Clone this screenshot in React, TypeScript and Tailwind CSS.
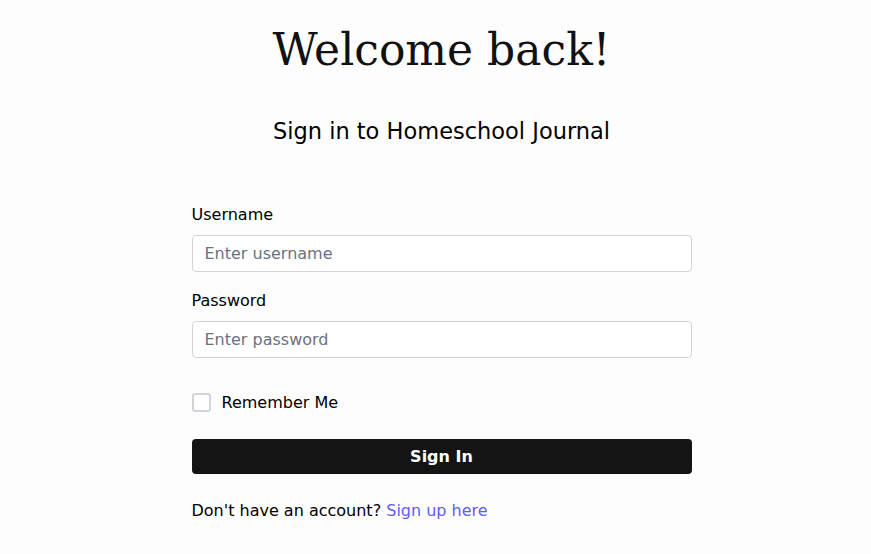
import { useState } from "react";

export default function App() {
  const [remember, setRemember] = useState(false);

  return (
    <main className="min-h-screen bg-[#fdfdfd] flex flex-col items-center pt-[22px] pl-[12px] font-['DejaVu_Sans',sans-serif] text-black">
      <h1 className="font-['DejaVu_Serif',serif] text-[44px] leading-[56px] font-normal text-[#111]">
        Welcome back!
      </h1>
      <h2 className="mt-[39px] text-[22.5px] leading-[28px] font-normal">
        Sign in to Homeschool Journal
      </h2>

      <form
        className="mt-[58px] w-[500px] flex flex-col"
        onSubmit={(e) => e.preventDefault()}
      >
        <label htmlFor="username" className="text-[16px] leading-[24px]">
          Username
        </label>
        <input
          id="username"
          type="text"
          placeholder="Enter username"
          className="mt-2 h-[37px] w-full rounded-[4px] border border-[#d4d4d8] bg-white px-3 text-[16px] placeholder:text-[#6b7280] outline-none"
        />

        <label htmlFor="password" className="mt-[17px] text-[16px] leading-[24px]">
          Password
        </label>
        <input
          id="password"
          type="password"
          placeholder="Enter password"
          className="mt-2 h-[37px] w-full rounded-[4px] border border-[#d4d4d8] bg-white px-3 text-[16px] placeholder:text-[#6b7280] outline-none"
        />

        {/* remember me checkbox */}
        <label className="mt-[35px] flex items-center gap-[11px] h-[19px] cursor-pointer">
          <input
            type="checkbox"
            checked={remember}
            onChange={() => setRemember(!remember)}
            className="appearance-none w-[19px] h-[19px] rounded-[3px] border-2 border-[#d1d5db] bg-white"
          />
          <span className="text-[16px] leading-[24px]">Remember Me</span>
        </label>

        <button
          type="submit"
          className="mt-[27px] h-[35px] w-full rounded-[4px] bg-[#141414] text-white text-[16px] font-semibold"
        >
          Sign In
        </button>

        <p className="mt-[25px] text-[16px] leading-[24px]">
          Don't have an account?{" "}
          <a href="#" className="text-[#5f5cf2]">
            Sign up here
          </a>
        </p>
      </form>
    </main>
  );
}
